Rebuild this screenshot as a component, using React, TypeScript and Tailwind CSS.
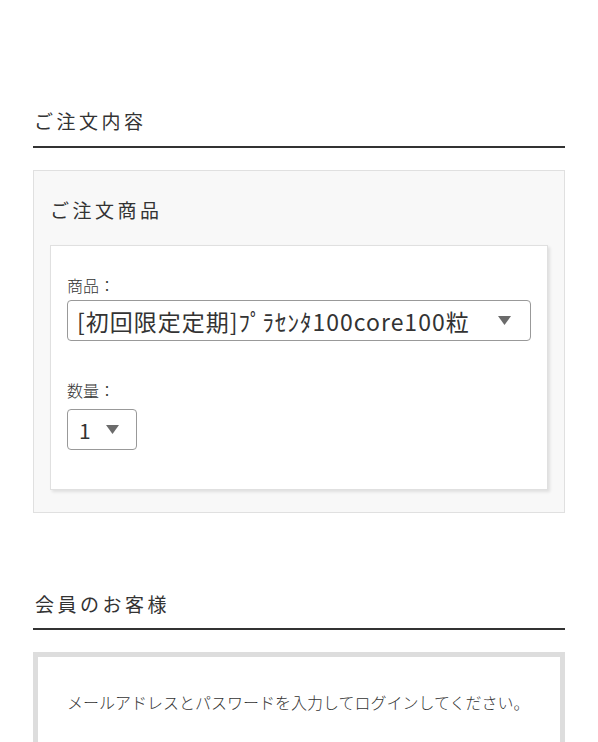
import React from "react";

const font = { fontFamily: '"Noto Sans CJK JP", "Noto Sans", sans-serif' };

function Arrow() {
  return (
    <svg width="13" height="9" viewBox="0 0 13 9" className="block">
      <path d="M0 0 L13 0 L6.5 9 Z" fill="#6b6b6b" />
    </svg>
  );
}

export default function App() {
  return (
    <div className="w-[598px] h-[742px] overflow-hidden bg-white text-[#333] font-light" style={font}>
      <div className="px-[33px] pt-[107px]">
        <h2 className="text-[19px] leading-[28px] tracking-[3.5px] pl-[1px] pb-[11px] border-b-2 border-[#333] font-normal">
          ご注文内容
        </h2>
        <div className="mt-[22px] border border-[#e0e0e0] bg-[#f8f8f8] pt-[25px] px-[16px] pb-[22px]">
          <h3 className="text-[19px] leading-[28px] tracking-[3.5px] font-normal">ご注文商品</h3>
          <div className="mt-[21px] border border-[#e0e0e0] bg-white shadow-[2px_2px_3px_rgba(0,0,0,0.1)] px-[16px] pt-[27px] pb-[39px]">
            <div className="text-[16px] leading-[24px]">商品：</div>
            <div className="mt-[3px] h-[41px] border border-[#999] rounded-[4px] flex items-center justify-between pl-[9px] pr-[19px]">
              <span className="text-[23px] leading-[30px] tracking-[1px] whitespace-nowrap font-normal">[初回限定定期]ﾌﾟﾗｾﾝﾀ100core100粒</span>
              <Arrow />
            </div>
            <div className="mt-[37px] text-[16px] leading-[24px]">数量：</div>
            <div className="mt-[7px] h-[41px] w-[70px] border border-[#999] rounded-[4px] flex items-center pl-[11px] gap-[15px]">
              <span className="text-[21px] leading-[28px] font-normal">1</span>
              <Arrow />
            </div>
          </div>
        </div>
        <h2 className="mt-[77px] text-[19px] leading-[28px] tracking-[3.5px] pl-[2px] pb-[10px] border-b-2 border-[#333] font-normal">
          会員のお客様
        </h2>
        <div className="mt-[22px] border-[5px] border-[#dddddd] h-[120px] pl-[29px] pt-[33px]">
          <p className="text-[16px] leading-[24px]">メールアドレスとパスワードを入力してログインしてください。</p>
        </div>
      </div>
    </div>
  );
}
